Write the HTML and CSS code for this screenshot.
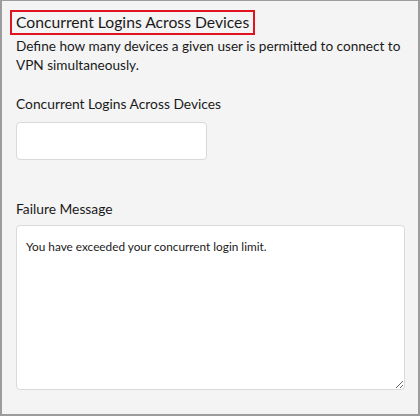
FILE: index.html
```html
<!DOCTYPE html>
<html>
<head>
<meta charset="utf-8">
<link rel="stylesheet" href="styles.css">
</head>
<body>
<div class="frame">
  <h1 class="title"><span class="title-box">Concurrent Logins Across Devices</span></h1>
  <p class="desc">Define how many devices a given user is permitted to connect to VPN simultaneously.</p>
  <label class="label first">Concurrent Logins Across Devices</label>
  <input class="text-input" type="text">
  <label class="label second">Failure Message</label>
  <textarea class="textarea">You have exceeded your concurrent login limit.</textarea>
</div>
</body>
</html>
```
FILE: styles.css
```css
html, body {
  margin: 0;
  padding: 0;
}
body {
  width: 420px;
  height: 416px;
  font-family: Lato, "Liberation Sans", sans-serif;
  color: #1a1a1a;
}
.frame {
  box-sizing: border-box;
  width: 420px;
  height: 416px;
  background: #f4f4f4;
  border: 2px solid #9c9c9c;
  border-top-width: 1px;
  padding: 9px 14px 0 14px;
  display: flex;
  flex-direction: column;
  align-items: flex-start;
}
.title {
  margin: 0;
  font-size: 15.7px;
  font-weight: normal;
  line-height: 21px;
}
.title-box {
  display: inline-block;
  border: 2px solid #e0141e;
  padding: 0 4px 0 4px;
  margin-left: -6px;
}
.desc {
  margin: 2px 0 0 0;
  font-size: 13.6px;
  line-height: 18.5px;
}
.label {
  display: block;
  font-size: 13.8px;
  line-height: 18px;
}
.label.first {
  margin-top: 21px;
}
.text-input {
  box-sizing: border-box;
  margin-top: 9px;
  width: 191px;
  height: 38px;
  border: 1px solid #d9d9d9;
  border-radius: 4px;
  background: #fff;
  outline: none;
}
.label.second {
  margin-top: 40px;
}
.textarea {
  box-sizing: border-box;
  margin-top: 7px;
  width: 389px;
  height: 165px;
  border: 1px solid #d9d9d9;
  border-radius: 4px;
  background: #fff;
  padding: 12px 9px;
  font-family: Lato, "Liberation Sans", sans-serif;
  font-size: 11.8px;
  line-height: 17px;
  color: #1a1a1a;
  resize: both;
  outline: none;
}
```
